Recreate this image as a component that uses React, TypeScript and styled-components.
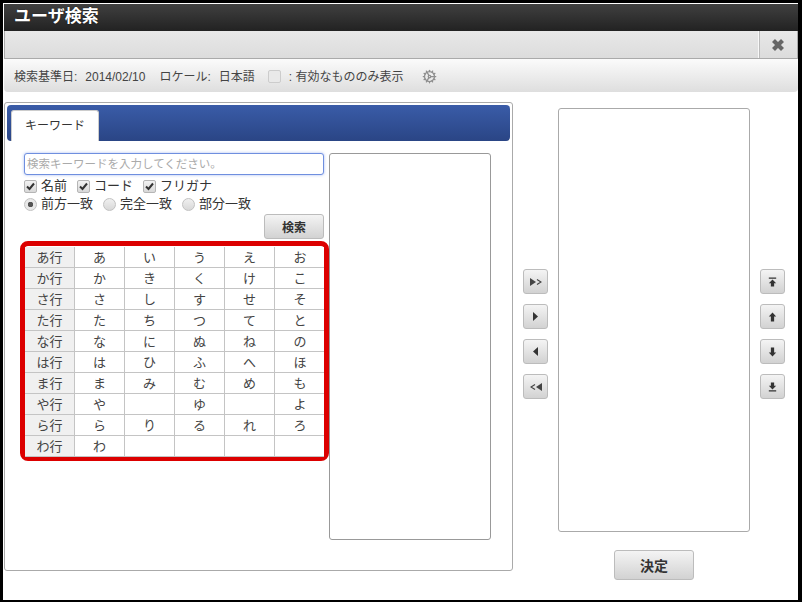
import React from "react";
import styled, { createGlobalStyle } from "styled-components";
import { Cog } from "lucide-react";

const Global = createGlobalStyle`
  html, body { margin: 0; padding: 0; background: #fff; overflow: hidden; }
  body { font-family: "Liberation Sans", "Noto Sans CJK JP", sans-serif; font-size: 12px; color: #333; }
`;
const Frame = styled.div`
  box-sizing: border-box; width: 802px; height: 602px; background: #fff;
  border: solid #000; border-width: 3px 4px 2px 3px; padding: 1px 0 0 1px;
  display: flex; flex-direction: column;
`;
const TitleBar = styled.div`
  height: 27px; background: linear-gradient(#404040, #222); color: #fff; font-weight: 700; font-size: 17px;
  line-height: 26px; padding-left: 10px; text-shadow: 0 0 1px #000;
`;
const ToolBar = styled.div`
  height: 28px; box-sizing: border-box; border-bottom: 1px solid #aaa; border-left: 1px solid #aaa; border-right: 1px solid #aaa;
  background: linear-gradient(#e8e8e8, #dcdcdc); display: flex; justify-content: flex-end;
`;
const CloseBox = styled.div`
  width: 39px; border-left: 1px solid #f8f8f8; box-shadow: inset 1px 0 0 #bbb; display: flex; align-items: center; justify-content: center; box-sizing: border-box; padding: 0 1px 0 0;
`;
const InfoBar = styled.div`
  height: 33px; box-sizing: border-box; background: linear-gradient(#fbfbfb, #dedede); border-radius: 0 0 4px 4px;
  display: flex; align-items: center; padding: 1px 0 0 10px; font-size: 12px; color: #444;
`;
const InfoText = styled.span<{ $gap?: number }>`
  margin-right: ${p => p.$gap ?? 0}px; white-space: nowrap; line-height: 16px; padding-top: 2px;
`;
const InfoCheck = styled.span`
  width: 11px; height: 11px; border: 1px solid #ccc; border-radius: 2px; background: #e9e9e9; margin-right: 8px;
`;
const GearWrap = styled.span`
  display: flex; margin-left: 19px; color: #8f8f8f;
`;
const Main = styled.div`
  display: flex; margin-top: 10px; flex: 1; min-height: 0;
`;
const Panel = styled.div`
  box-sizing: border-box; width: 509px; height: 469px; border: 1px solid #aaa; border-radius: 3px; padding: 2px; background: #fff;
`;
const TabBar = styled.div`
  height: 36px; box-sizing: border-box; background: linear-gradient(#3a5ca8, #2a4585); border-radius: 4px; padding: 5px 0 0 4px; display: flex; align-items: flex-end;
`;
const Tab = styled.div`
  width: 88px; height: 31px; box-sizing: border-box; background: #fff; border: 1px solid #ccc; border-bottom: none; border-radius: 3px 3px 0 0;
  text-align: center; line-height: 31px; font-size: 12px; color: #333;
`;
const PanelBody = styled.div`
  display: flex; padding: 12px 0 0 13px;
`;
const SearchCol = styled.div`
  width: 311px; display: flex; flex-direction: column;
`;
const SearchInput = styled.input`
  box-sizing: border-box; width: 300px; height: 22px; margin-left: 4px; border: 1px solid #6f8fdf; border-radius: 3px; padding: 0 2px; font: 11.5px "Liberation Sans", "Noto Sans CJK JP", sans-serif; outline: none;
  box-shadow: 0 0 3px rgba(80,120,230,.5);
  &::placeholder { color: #aaa; opacity: 1; }
`;
const OptionRow = styled.div<{ $top: number }>`
  display: flex; align-items: center; height: 18px; margin: ${p => p.$top}px 0 0 4px; font-size: 13px; color: #333;
`;
const CheckBox = styled.span`
  width: 11px; height: 11px; border: 1px solid #b5b5b5; border-radius: 2px; background: linear-gradient(#f2f2f2, #d8d8d8); display: flex; align-items: center; justify-content: center; margin-right: 4px;
`;
const RadioMark = styled.span<{ $on?: boolean }>`
  width: 11px; height: 11px; border: 1px solid #c2c2c2; border-radius: 50%; background: ${p => p.$on ? "radial-gradient(#555 0 2.5px, #e8e8e8 3px)" : "linear-gradient(#f0f0f0, #d8d8d8)"}; margin-right: 4px;
`;
const OptLabel = styled.span<{ $gap: number }>`
  margin-right: ${p => p.$gap}px; white-space: nowrap; line-height: 18px;
`;
const SearchRow = styled.div`
  display: flex; justify-content: flex-end; width: 304px; margin-top: 1px;
`;
const Btn = styled.button<{ $w: number; $h: number; $fs?: number }>`
  width: ${p => p.$w}px; height: ${p => p.$h}px; box-sizing: border-box; padding: 0; display: flex; align-items: center; justify-content: center;
  border: 1px solid #bcbcbc; border-radius: 3px; background: linear-gradient(#f4f4f4, #d2d2d2); color: #333; font: 700 ${p => p.$fs ?? 12}px "Liberation Sans", "Noto Sans CJK JP", sans-serif;
`;
const RedFrame = styled.div`
  box-sizing: border-box; width: 309px; height: 220px; margin-top: 2px; border: 5px solid #dc0000; border-radius: 8px; background: #fff; padding-top: 1px;
`;
const KanaGrid = styled.div`
  display: grid; grid-template-columns: repeat(6, 50px); grid-auto-rows: 21px; width: 299px; overflow: hidden;
`;
const Cell = styled.div<{ $head?: boolean; $last?: boolean }>`
  box-sizing: border-box; display: flex; align-items: center; justify-content: center; font-size: 13px; color: #444; padding-bottom: 2px;
  background: ${p => p.$head ? "#f0f0f0" : "#fff"};
  border-right: ${p => p.$last ? "none" : "1px solid #c4c4c4"};
  border-bottom: 1px solid #c4c4c4;
`;
const ResultList = styled.div`
  width: 162px; height: 387px; box-sizing: border-box; border: 1px solid #999; border-radius: 3px; background: #fff; margin-left: -2px;
`;
const MoveCol = styled.div<{ $left: number }>`
  width: 25px; margin-left: ${p => p.$left}px; display: flex; flex-direction: column; gap: 10px; padding-top: 167px;
`;
const RightCol = styled.div`
  width: 192px; margin: 6px 0 0 10px; display: flex; flex-direction: column; align-items: center;
`;
const SelectedList = styled.div`
  width: 192px; height: 424px; box-sizing: border-box; border: 1px solid #aaa; border-radius: 3px; background: #fff;
`;
const Decide = styled(Btn)`
  margin-top: 18px;
`;

const rows = [
  ["あ行","あ","い","う","え","お"],["か行","か","き","く","け","こ"],["さ行","さ","し","す","せ","そ"],
  ["た行","た","ち","つ","て","と"],["な行","な","に","ぬ","ね","の"],["は行","は","ひ","ふ","へ","ほ"],
  ["ま行","ま","み","む","め","も"],["や行","や","","ゆ","","よ"],["ら行","ら","り","る","れ","ろ"],["わ行","わ","","","",""],
];

const Tick = () => (
  <svg width="9" height="9" viewBox="0 0 9 9"><path d="M1 4.5 L3.5 7 L8 1.5" fill="none" stroke="#333" strokeWidth="2" /></svg>
);
const CloseIcon = () => (
  <svg width="14" height="14" viewBox="0 0 14 14"><path d="M2.5 2.5 L11.5 11.5 M11.5 2.5 L2.5 11.5" fill="none" stroke="#666" strokeWidth="4.2" /></svg>
);
const Ico = ({ d }: { d: string }) => (
  <svg width="9" height="10" viewBox="0 0 11 12"><path d={d} fill="#333" /></svg>
);
const moveIcons = [
  <svg width="12" height="8" viewBox="0 0 12 8" key="a"><path d="M0 0 L6 4 L0 8Z" fill="#444" /><path d="M7 1.5 L11 4 L7 6.5" fill="none" stroke="#444" strokeWidth="1.2" /></svg>,
  <svg width="5" height="9" viewBox="0 0 5 9" key="b"><path d="M0 0 L5 4.5 L0 9Z" fill="#333" /></svg>,
  <svg width="5" height="9" viewBox="0 0 5 9" key="c"><path d="M5 0 L0 4.5 L5 9Z" fill="#333" /></svg>,
  <svg width="12" height="8" viewBox="0 0 12 8" key="d"><path d="M12 0 L6 4 L12 8Z" fill="#444" /><path d="M5 1.5 L1 4 L5 6.5" fill="none" stroke="#444" strokeWidth="1.2" /></svg>,
];
const orderIcons = [
  "M1 0.5H10V2H1Z M5.5 3 L10 7.5H7.5V11.5H3.5V7.5H1Z",
  "M5.5 0.5 L10 5.5H7.5V11.5H3.5V5.5H1Z",
  "M3.5 0.5H7.5V6.5H10L5.5 11.5 L1 6.5H3.5Z",
  "M3.5 0.5H7.5V4.5H10L5.5 9 L1 4.5H3.5Z M1 10H10V11.5H1Z",
];

export default function App() {
  return (
    <Frame>
      <Global />
      <TitleBar>ユーザ検索</TitleBar>
      <ToolBar><CloseBox><CloseIcon /></CloseBox></ToolBar>
      <InfoBar>
        <InfoText $gap={8}>検索基準日:</InfoText>
        <InfoText $gap={14}>2014/02/10</InfoText>
        <InfoText $gap={8}>ロケール:</InfoText>
        <InfoText $gap={13}>日本語</InfoText>
        <InfoCheck />
        <InfoText>: 有効なもののみ表示</InfoText>
        <GearWrap><Cog size={15} /></GearWrap>
      </InfoBar>
      <Main>
        <Panel>
          <TabBar><Tab>キーワード</Tab></TabBar>
          <PanelBody>
            <SearchCol>
              <SearchInput placeholder="検索キーワードを入力してください。" readOnly />
              <OptionRow $top={2}>
                <CheckBox><Tick /></CheckBox><OptLabel $gap={10}>名前</OptLabel>
                <CheckBox><Tick /></CheckBox><OptLabel $gap={10}>コード</OptLabel>
                <CheckBox><Tick /></CheckBox><OptLabel $gap={0}>フリガナ</OptLabel>
              </OptionRow>
              <OptionRow $top={0}>
                <RadioMark $on /><OptLabel $gap={10}>前方一致</OptLabel>
                <RadioMark /><OptLabel $gap={10}>完全一致</OptLabel>
                <RadioMark /><OptLabel $gap={0}>部分一致</OptLabel>
              </OptionRow>
              <SearchRow><Btn $w={60} $h={25}>検索</Btn></SearchRow>
              <RedFrame>
                <KanaGrid>
                  {rows.flatMap((r, i) => r.map((c, j) => (
                    <Cell key={`${i}-${j}`} $head={j === 0} $last={j === 5}>{c}</Cell>
                  )))}
                </KanaGrid>
              </RedFrame>
            </SearchCol>
            <ResultList />
          </PanelBody>
        </Panel>
        <MoveCol $left={10}>
          {moveIcons.map((ic, i) => <Btn key={i} $w={25} $h={25}>{ic}</Btn>)}
        </MoveCol>
        <RightCol>
          <SelectedList />
          <Decide $w={80} $h={30} $fs={14}>決定</Decide>
        </RightCol>
        <MoveCol $left={10}>
          {orderIcons.map((d, i) => <Btn key={i} $w={25} $h={25}><Ico d={d} /></Btn>)}
        </MoveCol>
      </Main>
    </Frame>
  );
}
